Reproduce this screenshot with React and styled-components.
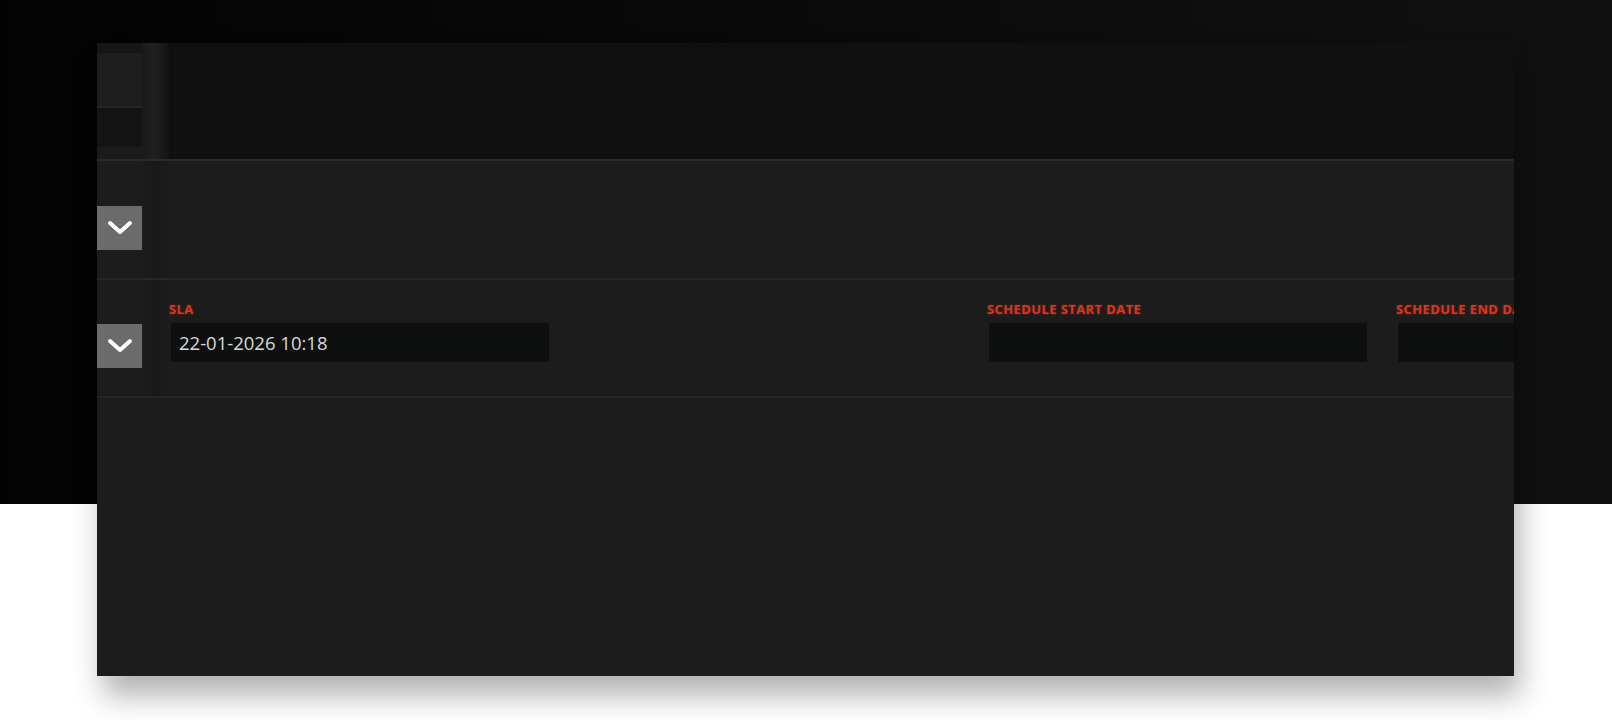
import React from 'react';
import styled, { createGlobalStyle } from 'styled-components';

const Global = createGlobalStyle`
  html, body { margin: 0; padding: 0; background: #fff; }
  body { font-family: "Open Sans", "Liberation Sans", sans-serif; }
`;

// dark band behind the card, white below it
const Stage = styled.div`
  width: 1612px;
  height: 720px;
  box-sizing: border-box;
  padding: 43px 0 0 97px;
  overflow: hidden;
  background:
    linear-gradient(90deg, #030303 0, #070707 30%, #0d0d0d 70%, #111111 100%) top left / 100% 504px no-repeat,
    #fff;
`;

const Card = styled.div`
  width: 1417px;
  height: 633px;
  background: #1c1c1c;
  overflow: hidden;
  display: flex;
  flex-direction: column;
  box-shadow: 6px 20px 28px rgba(0, 0, 0, 0.3);
`;

const Header = styled.div`
  height: 116px;
  display: flex;
  background: #111111;
  border-bottom: 2px solid #2a2a2a;
`;

const SidePanel = styled.div`
  width: 45px;
  display: flex;
  flex-direction: column;
  background: #161616;
  padding-top: 10px;
`;

const SideBlock = styled.div`
  height: ${p => p.h}px;
  background: ${p => p.bg};
  border-bottom: ${p => (p.line ? '2px solid #262626' : 'none')};
`;

const Divider = styled.div`
  width: 30px;
  background: linear-gradient(90deg, #1a1a1a 0, #202020 40%, #161616 80%, #0e0e0e 100%);
`;

const HeaderBody = styled.div`
  flex: 1;
  background: #101010;
`;

const Row = styled.div`
  height: ${p => p.h}px;
  display: flex;
  align-items: flex-start;
  border-bottom: 2px solid #262626;
  background: #1c1c1c;
`;

const ToggleCol = styled.div`
  width: 74px;
  flex: none;
  align-self: stretch;
  padding-top: ${p => p.top}px;
  box-sizing: border-box;
  background: linear-gradient(90deg, #1c1c1c 0, #1c1c1c 60%, #191919 80%, #1c1c1c 100%);
`;

const Toggle = styled.button`
  width: 45px;
  height: 44px;
  border: none;
  padding: 0;
  background: #6b6b6b;
  display: flex;
  align-items: center;
  justify-content: center;
`;

const Fields = styled.div`
  display: grid;
  grid-template-columns: repeat(4, 378px);
  column-gap: 31px;
  padding-top: 21px;
`;

const Field = styled.div`
  display: flex;
  flex-direction: column;
  gap: 4px;
`;

const Label = styled.div`
  height: 16px;
  margin-left: -2px;
  font-family: "Open Sans", "Liberation Sans", sans-serif;
  font-weight: 700;
  font-size: 13px;
  line-height: 16px;
  color: #d23a22;
  text-transform: uppercase;
  white-space: nowrap;
  letter-spacing: 0.4px;
  text-shadow: 0 0 3px rgba(200, 40, 20, 0.6);
`;

const Input = styled.div`
  height: 41px;
  box-sizing: border-box;
  background: #0e1010;
  border-top: 2px solid #1a1a1a;
  display: flex;
  align-items: center;
  padding-left: 8px;
  font-size: 18.5px;
  color: #d8d8d8;
`;

const Chevron = () => (
  <svg width="26" height="16" viewBox="0 0 26 16">
    <polyline points="3,3 13,12 23,3" fill="none" stroke="#fff" strokeWidth="4" strokeLinecap="round" strokeLinejoin="round" />
  </svg>
);

const fields = [
  { label: 'SLA', value: '22-01-2026 10:18' },
  null,
  { label: 'Schedule start date', value: '' },
  { label: 'Schedule end date', value: '' },
];

export default function App() {
  return (
    <Stage>
      <Global />
      <Card>
        <Header>
          <SidePanel>
            <SideBlock h={53} bg="#1e1e1e" line />
            <SideBlock h={39} bg="#141414" />
            <SideBlock h={12} bg="#1b1b1b" />
          </SidePanel>
          <Divider />
          <HeaderBody />
        </Header>
        <Row h={117}>
          <ToggleCol top={45}>
            <Toggle><Chevron /></Toggle>
          </ToggleCol>
        </Row>
        <Row h={116}>
          <ToggleCol top={44}>
            <Toggle><Chevron /></Toggle>
          </ToggleCol>
          <Fields>
            {fields.map((f, i) =>
              f ? (
                <Field key={i}>
                  <Label>{f.label}</Label>
                  <Input>{f.value}</Input>
                </Field>
              ) : (
                <div key={i} />
              )
            )}
          </Fields>
        </Row>
      </Card>
    </Stage>
  );
}
